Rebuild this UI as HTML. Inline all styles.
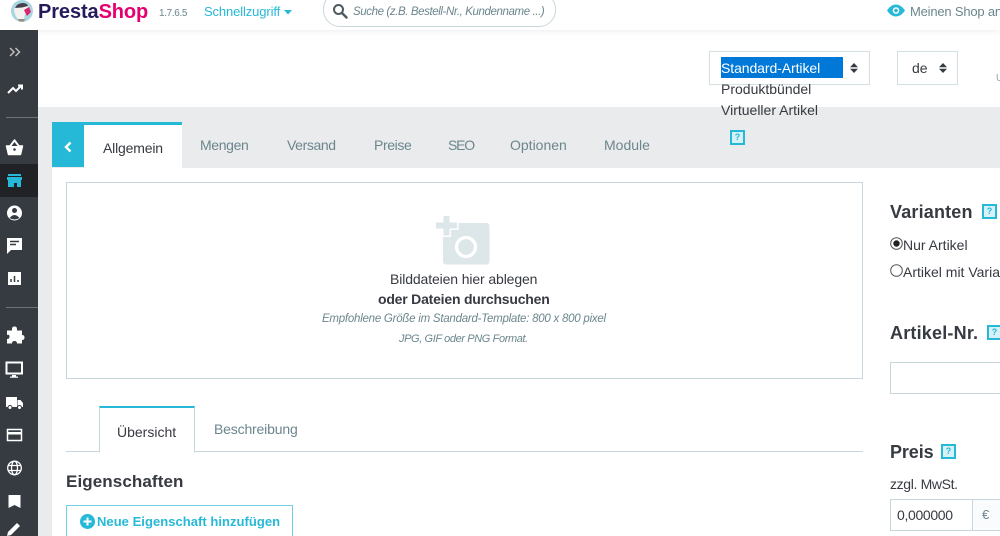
<!DOCTYPE html>
<html lang="de"><head><meta charset="utf-8"><title>PrestaShop</title>
<style>
html,body{margin:0;padding:0;width:1000px;height:536px;overflow:hidden;background:#fff}
body{font-family:"Liberation Sans",sans-serif;color:#363a41}
#p{position:absolute;left:0;top:0;width:1000px;height:536px;overflow:hidden;background:#fff;filter:blur(.3px)}
#p div,#p span,#p svg{position:absolute}
#p span span{position:static}
.t{white-space:nowrap;line-height:20px;height:20px;font-size:14px}
.b{font-weight:700}
.i{font-style:italic}
.help{width:11px;height:11px;border:2px solid #25b9d7;background:#d6f1f7;color:#25b9d7;font:700 9px/11px "Liberation Sans",sans-serif;text-align:center}
.g{color:#6c868e}
</style></head><body><div id="p">

<!-- grey content background -->
<div style="left:38px;top:107px;width:962px;height:429px;background:#eaebec"></div>

<!-- header -->
<div style="left:0;top:0;width:1000px;height:30px;background:#fff;z-index:3;box-shadow:0 1px 6px rgba(0,0,0,.08)"></div>
<div style="left:0;top:0;width:1000px;height:30px;z-index:4">
<svg style="left:10px;top:0" width="24" height="24" viewBox="0 0 24 24"><circle cx="12" cy="11" r="11" fill="#a9d6df"/><path d="M4 10q1-6 8-6t7 5l-3 1-2 9H8q-3-3-4-9z" fill="#f4f2ef"/><path d="M5 8q2-5 8-5 4 0 5 3l-6 1.500z" fill="#45434f"/><path d="M14 10l5-3 2 5-4 4z" fill="#d9266e"/><path d="M8 19h7l-1 2.500H9z" fill="#9a8f7f"/></svg>
<span class="t b" style="left:38px;top:1px;font-size:20px;line-height:22px;height:22px;color:#251b5b;letter-spacing:-.1px">Presta<span style="color:#e6006f">Shop</span></span>
<span class="t" style="left:159px;top:4px;font-size:10px;color:#6c868e;letter-spacing:-.35px">1.7.6.5</span>
<span class="t" style="left:204px;top:2px;font-size:13px;color:#25b9d7;letter-spacing:-.12px">Schnellzugriff</span>
<svg style="left:284px;top:10px" width="8" height="5"><path d="M0 0h8L4 4.500z" fill="#25b9d7"/></svg>
<div style="left:323px;top:-8px;width:231px;height:33px;border:1px solid #c8d7db;border-radius:17px;background:#fff"></div>
<svg style="left:332px;top:3px" width="16" height="16" viewBox="0 0 16 16"><circle cx="6.500" cy="6.500" r="4.500" fill="none" stroke="#4d5a60" stroke-width="2"/><path d="M10 10l4.500 4.500" stroke="#4d5a60" stroke-width="2.400" stroke-linecap="round"/></svg>
<span class="t i g" style="left:353px;top:2px;font-size:11.500px;letter-spacing:-.4px">Suche (z.B. Bestell-Nr., Kundenname ...)</span>
<svg style="left:887px;top:4px" width="18" height="14" viewBox="0 0 18 14"><path d="M0 6.500Q4 .5 9 .5t9 6q-4 6-9 6t-9-6z" fill="#25b9d7"/><circle cx="9" cy="6.500" r="3.300" fill="#fff"/><circle cx="9" cy="6.500" r="1.800" fill="#25b9d7"/></svg>
<span class="t g" style="left:910px;top:2px;font-size:13px;letter-spacing:-.2px">Meinen Shop an</span>
</div>

<!-- sidebar -->
<div style="left:0;top:30px;width:38px;height:506px;background:#363a41;z-index:5">
<div style="left:0;top:134px;width:38px;height:33px;background:#202226"></div>
<div style="left:6px;top:87px;width:32px;height:1px;background:#6c7278"></div>
<div style="left:6px;top:277px;width:32px;height:1px;background:#6c7278"></div>
<svg style="left:0;top:0" width="38" height="506" viewBox="0 30 38 506">
<path d="M10 48l4 4-4 4M15.500 48l4 4-4 4" fill="none" stroke="#bebebe" stroke-width="1.500"/>
<path d="M8 93l5-5 3 3 5-5M18 85.500h4v4" fill="none" stroke="#fff" stroke-width="2"/>
<path d="M6.500 146h16l-2 8.500h-12z M10 146l4.500-6 4.500 6" fill="#fff" stroke="#fff" stroke-width="1.500" stroke-linejoin="round"/><path d="M11.500 146l3-4 3 4z" fill="#363a41"/><circle cx="14.500" cy="149.500" r="1.300" fill="#363a41"/>
<path d="M8 174h13v2H8zM7 177h15v3H7zM8 180h13v7h-4v-4h-3v4H8z" fill="#25b9d7"/>
<circle cx="14.500" cy="213" r="7.500" fill="#fff"/><circle cx="14.500" cy="210.500" r="2.500" fill="#363a41"/><path d="M9.500 218q5-6 10 0-5 3-10 0z" fill="#363a41"/>
<path d="M7 238h15v12H11l-4 4z" fill="#fff"/><path d="M10 241.500h9M10 244.500h6" stroke="#363a41" stroke-width="1.500"/>
<rect x="8" y="272" width="13" height="13" fill="#fff"/><path d="M11 282v-3M14.500 282v-6M18 282v-2" stroke="#363a41" stroke-width="1.500"/>
<path d="M12 329q0-2.500 2.500-2.500t2.500 2.500v1.500h5v4.500q2.500 0 2.500 2.500t-2.500 2.500v3.500h-5q0-2.500-2.500-2.500t-2.500 2.500H7v-4.500q2.500 0 2.500-2.500T7 335v-4.500h5z" fill="#fff"/>
<path d="M6.500 362.500h15.500v11H6.500z" fill="none" stroke="#fff" stroke-width="2"/><path d="M12 375h4v1.500h2v1.200h-8v-1.200h2z" fill="#fff"/>
<path d="M6 397h11v10H6zM17.500 400h3l2.500 3v4h-5.500z" fill="#fff"/><circle cx="10" cy="407.500" r="2" fill="#fff" stroke="#363a41"/><circle cx="19.500" cy="407.500" r="2" fill="#fff" stroke="#363a41"/>
<rect x="7.500" y="429.500" width="14" height="11" fill="none" stroke="#fff" stroke-width="1.500"/><rect x="7.500" y="432" width="14" height="2.500" fill="#fff"/>
<g fill="none" stroke="#fff" stroke-width="1.300"><circle cx="14.500" cy="468" r="6.800"/><ellipse cx="14.500" cy="468" rx="3" ry="6.800"/><path d="M8 465.500h13M8 470.500h13"/></g>
<path d="M8.500 495h12v13l-6-3-6 3z" fill="#fff"/>
<path d="M7 536l1-4 9-9 3 3-9 9z" fill="#fff"/>
</svg>
</div>

<!-- header toolbar selects -->
<div style="left:709px;top:51px;width:159px;height:32px;border:1px solid #d3dfe2;background:#fff"></div>
<div style="left:721px;top:57px;width:122px;height:21px;background:#0078d7"></div>
<span class="t" style="left:721px;top:58px;color:#fff;letter-spacing:-.08px">Standard-Artikel</span>
<svg style="left:850px;top:63px" width="8" height="10"><path d="M0 4.300L4 0l4 4.300zM0 5.700L4 10l4-4.300z" fill="#363a41"/></svg>
<span class="t" style="left:721px;top:79px">Produktbündel</span>
<span class="t" style="left:721px;top:100px;z-index:1">Virtueller Artikel</span>
<div class="help" style="left:730px;top:130px;z-index:1">?</div>
<div style="left:897px;top:51px;width:59px;height:32px;border:1px solid #d3dfe2;background:#fff"></div>
<span class="t" style="left:912px;top:58px">de</span>
<svg style="left:939px;top:63px" width="8" height="10"><path d="M0 4.300L4 0l4 4.300zM0 5.700L4 10l4-4.300z" fill="#363a41"/></svg>
<span class="t" style="left:996px;top:69px;font-size:10px;color:#9aa7ab">U</span>

<!-- main tabs -->
<div style="left:52px;top:168px;width:948px;height:368px;background:#fff"></div>
<div style="left:52px;top:122px;width:32px;height:45px;background:#25b9d7"></div>
<svg style="left:63px;top:141px" width="10" height="12"><path d="M7.500 1.500L3 6l4.500 4.500" fill="none" stroke="#fff" stroke-width="2.400"/></svg>
<div style="left:84px;top:122px;width:98px;height:43px;border-top:3px solid #25b9d7;background:#fff"></div>
<span class="t" style="left:103px;top:138px;letter-spacing:-.18px">Allgemein</span>
<span class="t g" style="left:200px;top:135px;letter-spacing:-.35px">Mengen</span>
<span class="t g" style="left:287px;top:135px;letter-spacing:-.39px">Versand</span>
<span class="t g" style="left:374px;top:135px;letter-spacing:-.38px">Preise</span>
<span class="t g" style="left:448px;top:135px;font-size:14px;letter-spacing:-1.2px">SEO</span>
<span class="t g" style="left:510px;top:135px">Optionen</span>
<span class="t g" style="left:604px;top:135px">Module</span>

<!-- drop zone -->
<div style="left:66px;top:182px;width:795px;height:195px;border:1px solid #c8d7db"></div>
<svg style="left:434px;top:214px" width="58" height="52" viewBox="434 214 58 52">
<rect x="443" y="223" width="46.500" height="41.500" rx="3" fill="#dde6e9"/>
<path d="M436 222.500h7.500v-6.500h6v6.500h7.500v6h-7.500v7h-6v-7h-7.500z" fill="#dde6e9" stroke="#fff" stroke-width="3" paint-order="stroke"/>
<circle cx="466" cy="247" r="9.500" fill="none" stroke="#fff" stroke-width="3.300"/>
</svg>
<span class="t" style="left:390px;top:269px;letter-spacing:-.12px">Bilddateien hier ablegen</span>
<span class="t b" style="left:378px;top:289px;letter-spacing:-.21px">oder Dateien durchsuchen</span>
<span class="t i g" style="left:322px;top:309px;font-size:11.500px;letter-spacing:-.24px">Empfohlene Größe im Standard-Template: 800 x 800 pixel</span>
<span class="t i g" style="left:399px;top:329px;font-size:11px;letter-spacing:-.39px">JPG, GIF oder PNG Format.</span>

<!-- sub tabs -->
<div style="left:66px;top:451px;width:797px;height:1px;background:#c8d7db"></div>
<div style="left:99px;top:406px;width:94px;height:44px;border:1px solid #c8d7db;border-top:2px solid #25b9d7;border-bottom:1px solid #fff;background:#fff"></div>
<span class="t" style="left:117px;top:422px">Übersicht</span>
<span class="t g" style="left:214px;top:419px;letter-spacing:-.17px">Beschreibung</span>
<span class="t b" style="left:66px;top:472px;font-size:17px;letter-spacing:.1px">Eigenschaften</span>
<div style="left:66px;top:505px;width:225px;height:40px;border:1px solid #6fcfe3"></div>
<svg style="left:80px;top:514px" width="15" height="15" viewBox="0 0 15 15"><circle cx="7.500" cy="7.500" r="7.500" fill="#25b9d7"/><path d="M7.500 3.500v8M3.500 7.500h8" stroke="#fff" stroke-width="2"/></svg>
<span class="t b" style="left:97px;top:512px;font-size:13px;color:#25b9d7;letter-spacing:.04px">Neue Eigenschaft hinzufügen</span>

<!-- right column -->
<span class="t b" style="left:890px;top:202px;font-size:18px;letter-spacing:.18px">Varianten</span>
<div class="help" style="left:982px;top:204px">?</div>
<svg style="left:890px;top:237px" width="13" height="13"><circle cx="6.500" cy="6.500" r="5.800" fill="#fff" stroke="#555"/><circle cx="6.500" cy="6.500" r="3.200" fill="#222"/></svg>
<span class="t" style="left:903px;top:235px">Nur Artikel</span>
<svg style="left:890px;top:264px" width="13" height="13"><circle cx="6.500" cy="6.500" r="5.800" fill="#fff" stroke="#555"/></svg>
<span class="t" style="left:903px;top:262px">Artikel mit Varianten</span>
<span class="t b" style="left:890px;top:323px;font-size:18px;letter-spacing:.2px">Artikel-Nr.</span>
<div class="help" style="left:987px;top:325px">?</div>
<div style="left:890px;top:362px;width:120px;height:30px;border:1px solid #c8d7db"></div>
<span class="t b" style="left:890px;top:442px;font-size:18px;letter-spacing:-.1px">Preis</span>
<div class="help" style="left:941px;top:444px">?</div>
<span class="t" style="left:890px;top:474px;letter-spacing:-.35px">zzgl. MwSt.</span>
<div style="left:890px;top:499px;width:108px;height:30px;border:1px solid #c8d7db"></div>
<div style="left:972px;top:500px;width:27px;height:30px;border-left:1px solid #c8d7db;background:#fafbfc"></div>
<span class="t" style="left:897px;top:505px;letter-spacing:-.34px">0,000000</span>
<span class="t g" style="left:982px;top:505px;font-size:13px">€</span>
</div></body></html>
